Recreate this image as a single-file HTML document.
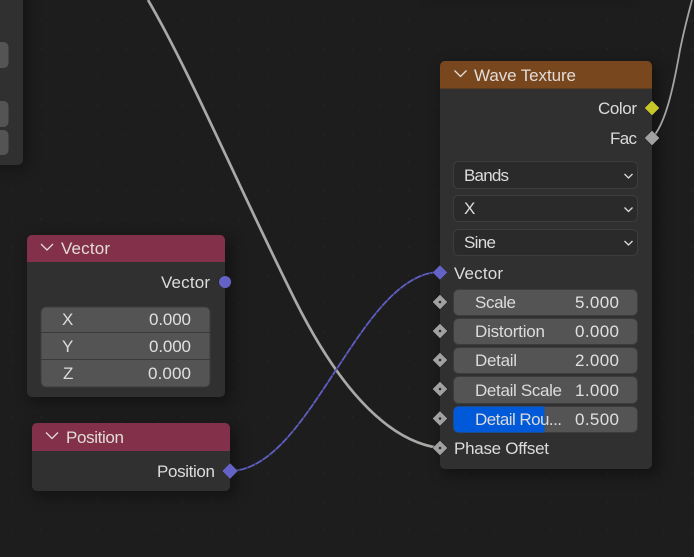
<!DOCTYPE html>
<html><head><meta charset="utf-8"><style>
html,body{margin:0;padding:0;background:#1d1d1d;width:694px;height:557px;overflow:hidden}
svg{display:block}
text{font-family:"Liberation Sans",sans-serif;font-size:17px;fill:#dcdcdc;}
.h{fill:#e2dcd8}
.v{fill:#e0e0e0}
</style></head><body>
<svg width="694" height="557" viewBox="0 0 694 557" xmlns="http://www.w3.org/2000/svg">
<defs>
<filter id="b" x="-30%" y="-30%" width="160%" height="160%"><feGaussianBlur stdDeviation="7"/></filter>
<pattern id="g" x="0" y="0" width="28.3" height="28.3" patternUnits="userSpaceOnUse"><rect x="12" y="20" width="1.5" height="1.5" fill="#252525"/></pattern>
<clipPath id="c1"><rect x="453.5" y="406.5" width="184" height="26" rx="5"/></clipPath>
<clipPath id="c2"><rect x="440" y="61" width="212" height="408" rx="5"/></clipPath>
</defs>
<rect width="694" height="557" fill="#1d1d1d"/>
<rect width="694" height="557" fill="url(#g)"/>

<!-- shadows -->
<rect x="-20" y="-20" width="48" height="190" rx="6" fill="#000" opacity=".3" filter="url(#b)"/>
<rect x="430" y="-20" width="200" height="22" fill="#000" opacity=".12" filter="url(#b)"/>
<rect x="442" y="64" width="217" height="411" rx="6" fill="#000" opacity=".35" filter="url(#b)"/>
<rect x="29" y="238" width="203" height="165" rx="6" fill="#000" opacity=".35" filter="url(#b)"/>
<rect x="34" y="426" width="203" height="71" rx="6" fill="#000" opacity=".35" filter="url(#b)"/>

<!-- top-left panel -->
<rect x="-10" y="-10" width="33" height="175" rx="5" fill="#303030"/>
<rect x="-10" y="42" width="18.500" height="26" rx="5" fill="#545454"/>
<rect x="-10" y="101" width="18.500" height="26" rx="5" fill="#545454"/>
<rect x="-10" y="130" width="18.500" height="25" rx="5" fill="#545454"/>

<!-- links -->
<path d="M148 0C190 72 240 190 295 300C325 360 375 440 440 448" fill="none" stroke="#a9a9a7" stroke-width="2.700"/>
<path d="M652 138C665 125 673 90 680 50C684 30 688 15 692 0" fill="none" stroke="#a4a4a4" stroke-width="1.800"/>
<path d="M230 471C310 471 360 272 440 272" fill="none" stroke="#5f5fc4" stroke-width="1.800"/>
<path d="M230 471C310 471 360 272 440 272" fill="none" stroke="#2b2b45" stroke-width="1.800" stroke-dasharray="1.500 7" opacity=".6"/>

<!-- Wave Texture node -->
<rect x="440" y="61" width="212" height="408" rx="5" fill="#303030"/>
<g clip-path="url(#c2)"><rect x="440" y="61" width="212" height="28" fill="#79471e"/><rect x="440" y="88" width="212" height="1" fill="#5e3c20"/></g>
<path d="M454.500 70.500L460.500 76.500L466.500 70.500" fill="none" stroke="#e4e0dc" stroke-width="1.300"/>
<text class="h" x="474" y="81" textLength="102">Wave Texture</text>
<text x="598" y="114" textLength="39">Color</text>
<text x="610" y="144" textLength="27">Fac</text>

<g fill="#2a2a2a" stroke="#3d3d3d" stroke-width="1">
<rect x="453.500" y="161.500" width="184" height="27" rx="5"/>
<rect x="453.500" y="195.500" width="184" height="26" rx="5"/>
<rect x="453.500" y="229.500" width="184" height="26" rx="5"/>
</g>
<text x="464" y="181" textLength="45">Bands</text>
<text x="464" y="214" textLength="11">X</text>
<text x="464" y="248" textLength="32">Sine</text>
<g fill="none" stroke="#dcdcdc" stroke-width="1.300">
<path d="M624.500 174L628.500 178L632.500 174"/>
<path d="M624.500 207.500L628.500 211.500L632.500 207.500"/>
<path d="M624.500 241L628.500 245L632.500 241"/>
</g>

<text x="454" y="279" textLength="49">Vector</text>
<g fill="#545454" stroke="#3c3c3c" stroke-width="1">
<rect x="453.500" y="289.500" width="184" height="26" rx="5"/>
<rect x="453.500" y="318.500" width="184" height="26" rx="5"/>
<rect x="453.500" y="347.500" width="184" height="26" rx="5"/>
<rect x="453.500" y="376.500" width="184" height="27" rx="5"/>
<rect x="453.500" y="406.500" width="184" height="26" rx="5"/>
</g>
<g clip-path="url(#c1)"><rect x="453" y="406" width="91.500" height="27" fill="#0059d9"/></g>
<text x="475" y="308" textLength="41">Scale</text>
<text x="475" y="337" textLength="70">Distortion</text>
<text x="475" y="366" textLength="42">Detail</text>
<text x="475" y="396" textLength="87">Detail Scale</text>
<text x="475" y="425" textLength="87">Detail Rou...</text>
<text class="v" x="575" y="308" textLength="44">5.000</text>
<text class="v" x="575" y="337" textLength="44">0.000</text>
<text class="v" x="575" y="366" textLength="44">2.000</text>
<text class="v" x="575" y="396" textLength="44">1.000</text>
<text class="v" x="575" y="425" textLength="44">0.500</text>
<text x="454" y="454" textLength="95">Phase Offset</text>

<!-- Wave sockets -->
<path d="M652 100.500L659.500 108L652 115.500L644.500 108Z" fill="#c7c729" stroke="#222" stroke-width=".5"/>
<path d="M652 130.500L659.500 138L652 145.500L644.500 138Z" fill="#a1a1a1" stroke="#222" stroke-width=".5"/>
<path d="M440 265L447.500 272.500L440 280L432.500 272.500Z" fill="#6363c7" stroke="#222" stroke-width=".5"/>
<g fill="#a1a1a1" stroke="#222" stroke-width=".5">
<path d="M440 294.500L447.500 302L440 309.500L432.500 302Z"/>
<path d="M440 323.500L447.500 331L440 338.500L432.500 331Z"/>
<path d="M440 352.500L447.500 360L440 367.500L432.500 360Z"/>
<path d="M440 381.500L447.500 389L440 396.500L432.500 389Z"/>
<path d="M440 411L447.500 418.500L440 426L432.500 418.500Z"/>
<path d="M440 440.500L447.500 448L440 455.500L432.500 448Z"/>
</g>
<g fill="#2a2a2a">
<circle cx="440" cy="302" r="1.300"/><circle cx="440" cy="331" r="1.300"/><circle cx="440" cy="360" r="1.300"/><circle cx="440" cy="389" r="1.300"/><circle cx="440" cy="418.500" r="1.300"/><circle cx="440" cy="448" r="1.300"/>
</g>

<!-- Vector node -->
<rect x="27" y="235" width="198" height="162" rx="5" fill="#303030"/>
<path d="M27 262V240a5 5 0 0 1 5-5H220a5 5 0 0 1 5 5V262Z" fill="#83314a"/>
<path d="M41 244L47 250L53 244" fill="none" stroke="#e4dcdf" stroke-width="1.300"/>
<text class="h" x="61" y="254" textLength="49">Vector</text>
<text x="161" y="288" textLength="49">Vector</text>
<circle cx="225" cy="282" r="6.300" fill="#6363c7" stroke="#222" stroke-width=".6"/>
<rect x="41" y="307" width="169" height="80" rx="5" fill="#545454" stroke="#3c3c3c"/>
<path d="M41 332.500H210M41 359.500H210" stroke="#3a3a3a" stroke-width="1"/>
<text x="62" y="325" textLength="10">X</text>
<text x="62" y="352" textLength="10">Y</text>
<text x="63" y="379" textLength="10">Z</text>
<text class="v" x="149" y="325" textLength="42">0.000</text>
<text class="v" x="149" y="352" textLength="42">0.000</text>
<text class="v" x="148" y="379" textLength="43">0.000</text>

<!-- Position node -->
<rect x="32" y="423" width="198" height="68" rx="5" fill="#303030"/>
<path d="M32 451V428a5 5 0 0 1 5-5H225a5 5 0 0 1 5 5V451Z" fill="#83314a"/>
<path d="M46 432.500L52 438.500L58 432.500" fill="none" stroke="#e4dcdf" stroke-width="1.300"/>
<text class="h" x="66" y="443" textLength="58">Position</text>
<text x="157" y="477" textLength="58">Position</text>
<path d="M230 463L238 471L230 479L222 471Z" fill="#6363c7" stroke="#222" stroke-width=".5"/>
</svg>
</body></html>
